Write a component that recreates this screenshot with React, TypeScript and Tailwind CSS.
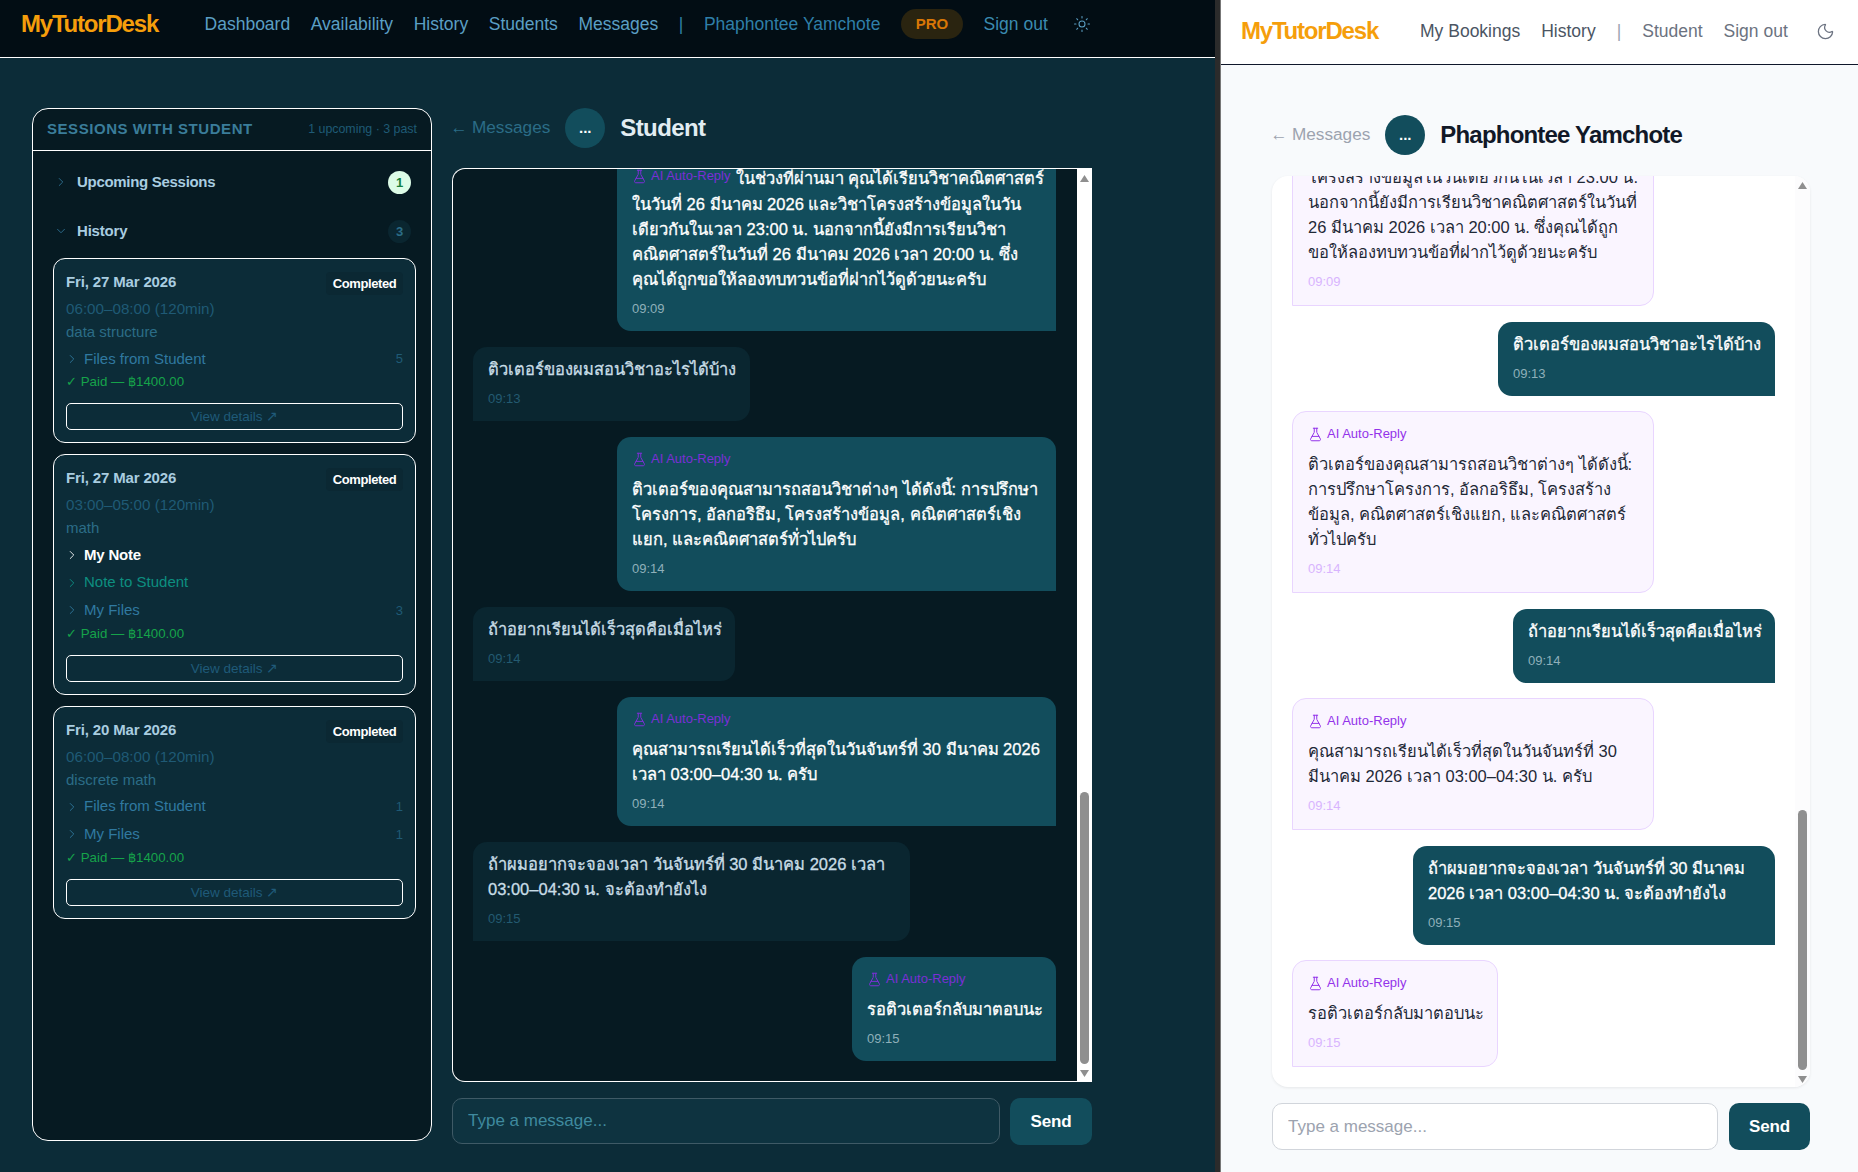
import { ChevronDown, ChevronRight, FlaskConical, Moon, Sun } from 'lucide-react'

type Msg = { mine: boolean; ai?: boolean; lead?: string; lines: string[]; time: string; w?: string }

const darkMsgs: Msg[] = [
  {
    mine: true,
    ai: true,
    w: 'w-[439px]',
    lead: 'ในช่วงที่ผ่านมา คุณได้เรียนวิชาคณิตศาสตร์',
    lines: [
      'ในวันที่ 26 มีนาคม 2026 และวิชาโครงสร้างข้อมูลในวัน',
      'เดียวกันในเวลา 23:00 น. นอกจากนี้ยังมีการเรียนวิชา',
      'คณิตศาสตร์ในวันที่ 26 มีนาคม 2026 เวลา 20:00 น. ซึ่ง',
      'คุณได้ถูกขอให้ลองทบทวนข้อที่ฝากไว้ดูด้วยนะครับ',
    ],
    time: '09:09',
  },
  { mine: false, lines: ['ติวเตอร์ของผมสอนวิชาอะไรได้บ้าง'], time: '09:13', w: 'w-[277px]' },
  {
    mine: true,
    ai: true,
    w: 'w-[439px]',
    lines: [
      'ติวเตอร์ของคุณสามารถสอนวิชาต่างๆ ได้ดังนี้: การปรึกษา',
      'โครงการ, อัลกอริธึม, โครงสร้างข้อมูล, คณิตศาสตร์เชิง',
      'แยก, และคณิตศาสตร์ทั่วไปครับ',
    ],
    time: '09:14',
  },
  { mine: false, lines: ['ถ้าอยากเรียนได้เร็วสุดคือเมื่อไหร่'], time: '09:14', w: 'w-[262px]' },
  {
    mine: true,
    ai: true,
    w: 'w-[439px]',
    lines: ['คุณสามารถเรียนได้เร็วที่สุดในวันจันทร์ที่ 30 มีนาคม 2026', 'เวลา 03:00–04:30 น. ครับ'],
    time: '09:14',
  },
  {
    mine: false,
    w: 'w-[437px]',
    lines: ['ถ้าผมอยากจะจองเวลา วันจันทร์ที่ 30 มีนาคม 2026 เวลา', '03:00–04:30 น. จะต้องทำยังไง'],
    time: '09:15',
  },
  { mine: true, ai: true, lines: ['รอติวเตอร์กลับมาตอบนะ'], time: '09:15', w: 'w-[204px]' },
]

const lightMsgs: Msg[] = [
  {
    mine: false,
    ai: true,
    w: 'w-[362px]',
    lines: [
      'โครงสร้างข้อมูลในวันเดียวกันในเวลา 23:00 น.',
      'นอกจากนี้ยังมีการเรียนวิชาคณิตศาสตร์ในวันที่',
      '26 มีนาคม 2026 เวลา 20:00 น. ซึ่งคุณได้ถูก',
      'ขอให้ลองทบทวนข้อที่ฝากไว้ดูด้วยนะครับ',
    ],
    time: '09:09',
  },
  { mine: true, lines: ['ติวเตอร์ของผมสอนวิชาอะไรได้บ้าง'], time: '09:13', w: 'w-[277px]' },
  {
    mine: false,
    ai: true,
    w: 'w-[362px]',
    lines: [
      'ติวเตอร์ของคุณสามารถสอนวิชาต่างๆ ได้ดังนี้:',
      'การปรึกษาโครงการ, อัลกอริธึม, โครงสร้าง',
      'ข้อมูล, คณิตศาสตร์เชิงแยก, และคณิตศาสตร์',
      'ทั่วไปครับ',
    ],
    time: '09:14',
  },
  { mine: true, lines: ['ถ้าอยากเรียนได้เร็วสุดคือเมื่อไหร่'], time: '09:14', w: 'w-[262px]' },
  {
    mine: false,
    ai: true,
    w: 'w-[362px]',
    lines: ['คุณสามารถเรียนได้เร็วที่สุดในวันจันทร์ที่ 30', 'มีนาคม 2026 เวลา 03:00–04:30 น. ครับ'],
    time: '09:14',
  },
  {
    mine: true,
    w: 'w-[362px]',
    lines: ['ถ้าผมอยากจะจองเวลา วันจันทร์ที่ 30 มีนาคม', '2026 เวลา 03:00–04:30 น. จะต้องทำยังไง'],
    time: '09:15',
  },
  { mine: false, ai: true, lines: ['รอติวเตอร์กลับมาตอบนะ'], time: '09:15', w: 'w-[206px]' },
]

const AiLabel = ({ dark }: { dark: boolean }) => (
  <div className={`flex items-center gap-[4px] h-[16px] text-[13px] whitespace-nowrap ${dark ? 'text-[#7c2fd6]' : 'text-[#9333ea]'}`}>
    <FlaskConical size={15} strokeWidth={1.6} />
    <span>AI Auto-Reply</span>
  </div>
)

const DarkBubble = ({ m }: { m: Msg }) => (
  <div
    className={`${m.w} shrink-0 px-[15px] pb-[14px] rounded-t-[14px] ${m.ai ? 'pt-[14px]' : 'pt-[10px]'} ${
      m.mine ? 'self-end bg-[#124d5c] rounded-bl-[14px] text-white' : 'self-start bg-[#0a2630] rounded-br-[14px] text-[#c8dde6]'
    }`}
  >
    {m.lead ? (
      <div className="flex items-center h-[28px] gap-[5px] whitespace-nowrap text-[16.5px] [-webkit-text-stroke:0.3px_currentColor]">
        <div className="-mt-[4px] [-webkit-text-stroke:0]">
          <AiLabel dark />
        </div>
        <span>{m.lead}</span>
      </div>
    ) : (
      m.ai && (
        <div className="mb-[10px]">
          <AiLabel dark />
        </div>
      )
    )}
    {m.lines.map((l) => (
      <div key={l} className="text-[16.5px] leading-[25px] whitespace-nowrap [-webkit-text-stroke:0.3px_currentColor]">
        {l}
      </div>
    ))}
    <div className={`mt-[9px] h-[16px] leading-[16px] text-[13px] ${m.mine ? 'text-[#8fb0ba]' : 'text-[#235a70]'}`}>{m.time}</div>
  </div>
)

const LightBubble = ({ m }: { m: Msg }) =>
  m.ai ? (
    <div className={`${m.w} shrink-0 self-start px-[15px] pt-[14px] pb-[15px] rounded-t-[14px] rounded-br-[14px] border border-[#e9d5ff] bg-[#faf5ff] text-[#1f2937]`}>
      <div className="mb-[10px]">
        <AiLabel dark={false} />
      </div>
      {m.lines.map((l) => (
        <div key={l} className="text-[16.5px] leading-[25px] whitespace-nowrap">
          {l}
        </div>
      ))}
      <div className="mt-[9px] h-[16px] leading-[16px] text-[13px] text-[#d8b4fe]">{m.time}</div>
    </div>
  ) : (
    <div className={`${m.w} shrink-0 self-end px-[15px] pt-[10px] pb-[14px] rounded-t-[14px] rounded-bl-[14px] bg-[#124d5c] text-white`}>
      {m.lines.map((l) => (
        <div key={l} className="text-[16.5px] leading-[25px] whitespace-nowrap [-webkit-text-stroke:0.3px_currentColor]">
          {l}
        </div>
      ))}
      <div className="mt-[9px] h-[16px] leading-[16px] text-[13px] text-[#8fb0ba]">{m.time}</div>
    </div>
  )

// drawn like the native scrollbar in the picture
const FakeScrollbar = ({ thumb, light }: { thumb: string; light?: boolean }) => (
  <div className={`w-[15px] shrink-0 flex flex-col items-center pt-[6px] pb-[4px] ${light ? 'bg-[#fcfcfd]' : 'bg-white'}`}>
    <svg width="9" height="7" viewBox="0 0 9 7" className="fill-[#8f8f8f]">
      <polygon points="4.5,0 9,7 0,7" />
    </svg>
    <div className="flex-1" />
    <div className={`${thumb} w-[9px] rounded-[5px] bg-[#8f8f8f]`} />
    <svg width="9" height="7" viewBox="0 0 9 7" className="fill-[#8f8f8f] mt-[6px]">
      <polygon points="0,0 9,0 4.5,7" />
    </svg>
  </div>
)

type Row = { label: string; count?: string; tone?: 'on' | 'teal' }

const SessionRow = ({ label, count, tone }: Row) => (
  <div className="flex items-center h-[27.7px] text-[15px]">
    <ChevronRight
      size={14}
      strokeWidth={1.5}
      className={`mr-[5px] -ml-[1px] ${tone === 'on' ? 'text-white' : tone === 'teal' ? 'text-[#0d9488]' : 'text-[#3079a0]'}`}
    />
    <span className={tone === 'on' ? 'text-white font-semibold tracking-[-0.2px]' : tone === 'teal' ? 'text-[#0d8f80]' : 'text-[#3079a0]'}>{label}</span>
    {count && <span className="ml-auto text-[13px] text-[#1f5a75]">{count}</span>}
  </div>
)

const SessionCard = ({ date, time, subject, rows }: { date: string; time: string; subject: string; rows: Row[] }) => (
  <div className="rounded-[12px] border border-white bg-[#0c2c38] pt-[13px] px-[12px] pb-[12px]">
    <div className="flex justify-between h-[23px]">
      <div className="h-[20px] leading-[20px] text-[15px] font-bold tracking-[-0.15px] text-[#a9cde0]">{date}</div>
      <div className="h-[23px] w-[77px] rounded-[4px] bg-[#0b2833] text-center leading-[23px] text-[13px] font-semibold tracking-[-0.4px] text-white">Completed</div>
    </div>
    <div className="mt-[5px] h-[18px] leading-[18px] text-[15.2px] text-[#1f5a75]">{time}</div>
    <div className="mt-[4px] h-[19px] leading-[19px] text-[15px] text-[#2b6c87]">{subject}</div>
    <div className="mt-[4px]">
      {rows.map((r) => (
        <SessionRow key={r.label} {...r} />
      ))}
    </div>
    <div className="mt-[0.5px] h-[18px] leading-[18px] text-[13.3px] text-[#16a34a]">✓ Paid — ฿1400.00</div>
    <div className="mt-[12px] h-[27px] rounded-[5px] border border-white text-center leading-[25px] text-[13.5px] text-[#1f5a78]">View details ↗</div>
  </div>
)

const Avatar = () => (
  <div className="w-[40px] h-[40px] rounded-full bg-[#124d5c] flex items-center justify-center text-white text-[15px] font-bold">...</div>
)

export default function App() {
  return (
    <div className="flex w-[1858px] h-[1172px] overflow-hidden font-['Liberation_Sans',sans-serif]">
      {/* dark window */}
      <div className="w-[1215px] shrink-0 bg-[#0c2c38] flex flex-col">
        <nav className="h-[58px] shrink-0 border-b border-white bg-[#020d14] flex items-start pl-[21px] pt-[8px] text-[17.5px] text-[#5b9fc4]">
          <span className="text-[24px] leading-[32px] font-bold tracking-[-1.2px] text-[#f59e0b]">MyTutorDesk</span>
          <div className="ml-[46.5px] h-[32px] flex items-center gap-[20.6px]">
            <span>Dashboard</span>
            <span>Availability</span>
            <span>History</span>
            <span>Students</span>
            <span>Messages</span>
            <span className="text-[#2f7fa8]">|</span>
            <span className="text-[#2f7fa8]">Phaphontee Yamchote</span>
            <span className="h-[30px] w-[62px] rounded-full bg-[#2a2410] text-center leading-[30px] text-[15px] font-bold text-[#d97706]">PRO</span>
            <span className="text-[#3b8bb0]">Sign out</span>
            <Sun size={18} strokeWidth={1.4} className="ml-[5px] text-[#5b9fc4]" />
          </div>
        </nav>

        <div className="flex gap-[20px] pl-[32px] pt-[50px]">
          <aside className="w-[400px] h-[1033px] rounded-[16px] border border-white bg-[#061a22]">
            <div className="h-[42px] border-b border-white flex items-center justify-between px-[14px]">
              <span className="text-[15px] font-bold tracking-[0.55px] text-[#3a7d9a]">SESSIONS WITH STUDENT</span>
              <span className="text-[12.4px] text-[#1f5a75]">1 upcoming · 3 past</span>
            </div>
            <div className="pl-[20px] pr-[15px] pt-[19px]">
              <div className="flex items-center h-[24px] text-[15px] font-semibold tracking-[-0.3px] text-[#a9cde0]">
                <ChevronRight size={14} strokeWidth={1.5} className="ml-[1px] mr-[9px] text-[#2f7396]" />
                <span>Upcoming Sessions</span>
                <span className="ml-auto mr-[5px] w-[23px] h-[23px] rounded-full bg-[#dcfce7] text-center leading-[23px] text-[13px] font-bold text-[#15803d]">1</span>
              </div>
              <div className="mt-[25px] flex items-center h-[24px] text-[15px] font-semibold tracking-[-0.2px] text-[#a9cde0]">
                <ChevronDown size={14} strokeWidth={1.5} className="ml-[1px] mr-[9px] text-[#2f7396]" />
                <span>History</span>
                <span className="ml-auto mr-[5px] w-[23px] h-[23px] rounded-full bg-[#0a2630] text-center leading-[23px] text-[13px] font-bold text-[#2b6c87]">3</span>
              </div>
              <div className="mt-[15px] flex flex-col gap-[11px]">
                <SessionCard date="Fri, 27 Mar 2026" time="06:00–08:00 (120min)" subject="data structure" rows={[{ label: 'Files from Student', count: '5' }]} />
                <SessionCard
                  date="Fri, 27 Mar 2026"
                  time="03:00–05:00 (120min)"
                  subject="math"
                  rows={[{ label: 'My Note', tone: 'on' }, { label: 'Note to Student', tone: 'teal' }, { label: 'My Files', count: '3' }]}
                />
                <SessionCard
                  date="Fri, 20 Mar 2026"
                  time="06:00–08:00 (120min)"
                  subject="discrete math"
                  rows={[{ label: 'Files from Student', count: '1' }, { label: 'My Files', count: '1' }]}
                />
              </div>
            </div>
          </aside>

          <section className="w-[640px]">
            <div className="flex items-center h-[40px]">
              <span className="-ml-[2px] text-[17.2px] text-[#2b6c87]">← Messages</span>
              <div className="ml-[15px]">
                <Avatar />
              </div>
              <span className="ml-[15px] text-[24px] font-bold tracking-[-0.6px] text-[#e2edf2]">Student</span>
            </div>
            <div className="mt-[20px] h-[914px] flex rounded-l-[13px] border border-white border-r-0 bg-[#061a22] overflow-hidden">
              <div className="flex-1 min-w-0 flex flex-col justify-end gap-[16px] pl-[20px] pr-[21px] pb-[20px] overflow-hidden">
                {darkMsgs.map((m) => (
                  <DarkBubble key={m.lines[0]} m={m} />
                ))}
              </div>
              <FakeScrollbar thumb="h-[272px]" />
            </div>
            <div className="mt-[16px] flex gap-[10px]">
              <input
                placeholder="Type a message..."
                className="flex-1 min-w-0 h-[46px] rounded-[10px] border border-[#3f5a66] bg-[#0e3340] px-[15px] text-[17px] placeholder:text-[#3f8a9e] outline-none"
              />
              <button className="w-[82px] h-[47px] rounded-[10px] bg-[#124d5c] text-[17px] font-bold tracking-[-0.2px] text-white">Send</button>
            </div>
          </section>
        </div>
      </div>

      <div className="w-[5px] shrink-0 bg-[#2b2b2b]" />

      {/* light window */}
      <div className="flex-1 min-w-0 border-l border-[#777777] bg-[#f8fafc] flex flex-col">
        <nav className="h-[65px] shrink-0 border-b border-[#0f172a] bg-white flex items-center pl-[20px] pb-[2px] text-[17.5px] text-[#4b5563]">
          <span className="text-[24px] font-bold tracking-[-1.2px] text-[#f59e0b]">MyTutorDesk</span>
          <div className="ml-[42px] flex items-center gap-[21px]">
            <span>My Bookings</span>
            <span>History</span>
            <span className="text-[#9ca3af]">|</span>
            <span className="text-[#6b7280]">Student</span>
            <span className="text-[#6b7280]">Sign out</span>
            <Moon size={19} strokeWidth={1.6} className="ml-[7px] text-[#6b7280]" />
          </div>
        </nav>
        <div className="pl-[51px] pr-[48px] pt-[50px]">
          <div className="flex items-center h-[40px]">
            <span className="-ml-[2px] text-[17.2px] text-[#9ca3af]">← Messages</span>
            <div className="ml-[15px]">
              <Avatar />
            </div>
            <span className="ml-[15px] text-[24px] font-bold tracking-[-0.8px] text-[#111827]">Phaphontee Yamchote</span>
          </div>
          <div className="mt-[21px] h-[911px] flex rounded-[16px] bg-white shadow-[0_1px_3px_rgba(0,0,0,0.08)] overflow-hidden">
            <div className="flex-1 min-w-0 flex flex-col justify-end gap-[15.5px] pl-[20px] pr-[20px] pb-[20px] overflow-hidden">
              {lightMsgs.map((m) => (
                <LightBubble key={m.lines[0]} m={m} />
              ))}
            </div>
            <FakeScrollbar thumb="h-[260px]" light />
          </div>
          <div className="mt-[16px] flex gap-[11px]">
            <input
              placeholder="Type a message..."
              className="flex-1 min-w-0 h-[47px] rounded-[10px] border border-[#d1d5db] bg-white px-[15px] text-[17px] placeholder:text-[#9ca3af] outline-none"
            />
            <button className="w-[81px] h-[47px] rounded-[10px] bg-[#124d5c] text-[17px] font-bold tracking-[-0.2px] text-white">Send</button>
          </div>
        </div>
      </div>
    </div>
  )
}
